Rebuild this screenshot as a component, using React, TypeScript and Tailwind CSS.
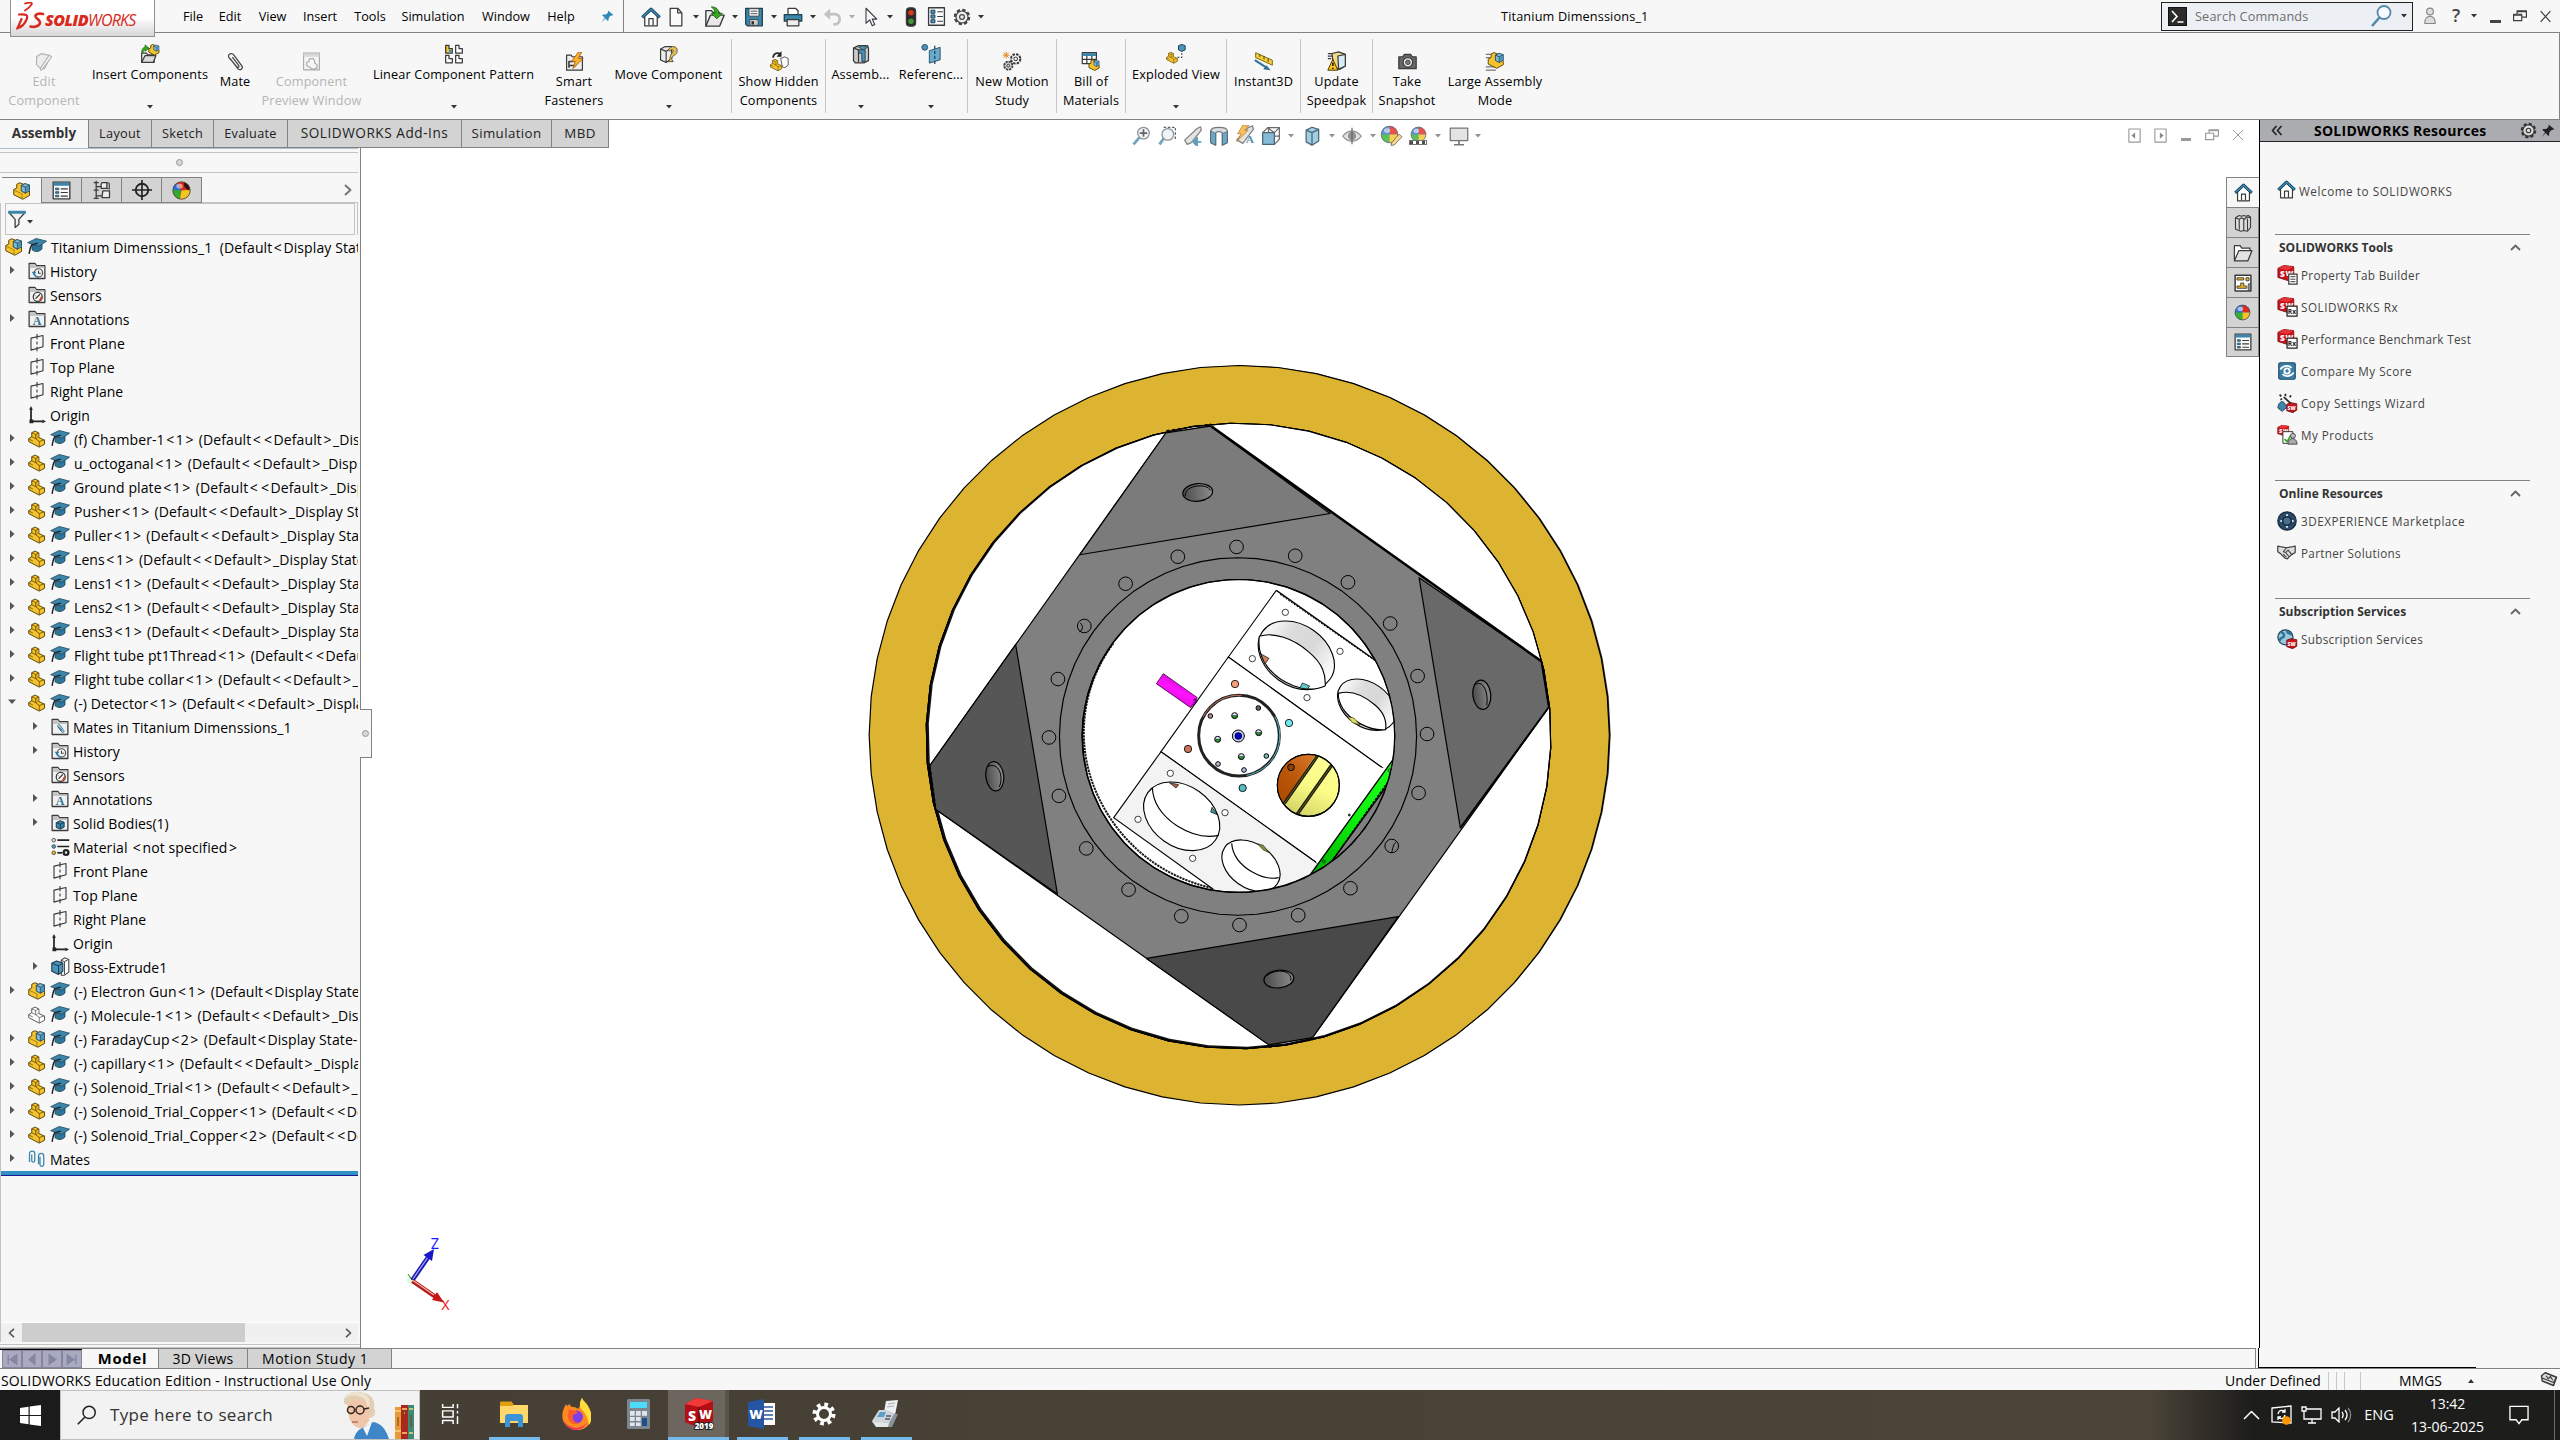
import React from "react";

type Kids = { children?: React.ReactNode; className?: string };

/* ---------- small drawing helpers ---------- */

const Svg = ({ s = 20, w, h, vb = "0 0 24 24", children, className = "" }: { s?: number; w?: number; h?: number; vb?: string } & Kids) => (
  <svg width={w ?? s} height={h ?? s} viewBox={vb} fill="none" stroke="#3b3b3b" strokeWidth="1.5" strokeLinejoin="round" className={`shrink-0 ${className}`}>
    {children}
  </svg>
);

const Caret = ({ className = "w-[15px]", c = "#333" }: { className?: string; c?: string }) => (
  <span className={`flex shrink-0 justify-center ${className}`}>
    <svg width="6" height="4" viewBox="0 0 6 4"><path d="M0 0h6L3 3.6z" fill={c} /></svg>
  </span>
);

const PartPaths = ({ ghost = false }: { ghost?: boolean }) => (
  <g stroke={ghost ? "#555" : "#5b4708"} strokeWidth="1.3">
    <path d="M1 11.5 5 9V3.5L9.500 1.500 14.500 4v6l7.500 3.500V19l-7 3.800L1 15.500z" fill={ghost ? "#fff" : "#f5c32c"} />
    <path d="M5 9l5 2.500 4.500-2M5 3.700 10 6v5.500l5 3.500v7.500M10 6l4.500-2M15 15.500l7-2.500M1 11.800l5.500 3" fill="none" strokeWidth="1" />
    <path d="M10.500 6.600 14 5v4.500l-3.500 1.600z" fill={ghost ? "#eee" : "#d9a514"} stroke="none" />
  </g>
);

const Part = ({ s = 18, ghost = false }: { s?: number; ghost?: boolean }) => (
  <Svg s={s}><PartPaths ghost={ghost} /></Svg>
);

const CubePaths = () => (
  <g stroke="#1d4257" strokeWidth="1.2">
    <path d="M11 4.500 16 2l6 2v7.500l-5.500 3.500L11 12z" fill="#7db9d8" />
    <path d="M11 4.500 16.500 7 22 4.200M16.500 7v8" />
    <path d="M17 7.500 21.500 5v6.200L17 14z" fill="#4b93b8" stroke="none" />
  </g>
);

const Asm = ({ s = 18 }: { s?: number }) => (
  <Svg s={s}>
    <path d="M1 10 5 8V3l4-2 5 2v7l8 2v6l-9 5L1 17z" fill="#f5c32c" stroke="#5b4708" strokeWidth="1.3" />
    <path d="M1 10.500 12 16v6.500" stroke="#8a6b0e" strokeWidth="1" />
    <CubePaths />
  </Svg>
);

const Grad = () => (
  <Svg w={20} h={18} vb="0 0 24 21">
    <path d="M6 9v6c4 3 8 3 12-1V8z" fill="#2f7396" stroke="#1f4c63" strokeWidth="1" />
    <path d="M.8 6.500 11 1.500l12.500 3.200L14 11z" fill="#3b86ab" stroke="#1f4c63" strokeWidth="1" />
    <path d="M13 7 5.500 9.200C3.500 13 3.200 16 2.500 20" stroke="#222" strokeWidth="1.700" />
  </Svg>
);

const Folder = ({ children }: Kids) => (
  <Svg s={18}>
    <path d="M1.500 22V2h8l2 3H22.500v17z" fill="#f1f1f1" strokeWidth="1.700" />
    <path d="M2.500 3h6.500l2 3H22v2H2.500z" fill="#c4c4c4" stroke="none" />
    {children}
  </Svg>
);

const FHistory = () => (
  <Folder>
    <circle cx="14" cy="14.500" r="5.500" stroke="#555" strokeWidth="1.600" />
    <path d="M14 11.500v3.500h3" stroke="#444" />
    <path d="M5 13h6L8 18z" fill="#2f7ea6" stroke="none" />
    <path d="M8 14c0 4 3 6 6 6" stroke="#2f7ea6" strokeWidth="2" />
  </Folder>
);
const FSensors = () => (
  <Folder>
    <circle cx="13" cy="14.500" r="6" fill="#fff" strokeWidth="1.700" />
    <path d="M14 19.500l4-7 .8 3.500-2 3z" fill="#e23b1c" stroke="none" />
    <path d="M10 17l6-6M9 13h1" strokeWidth="1.600" />
  </Folder>
);
const FAnnot = () => (
  <Folder>
    <text x="12.200" y="20" textAnchor="middle" fontSize="16" fontWeight="700" fontFamily="Liberation Serif, serif" fill="#2f7396" stroke="none">A</text>
  </Folder>
);
const FMates = () => (
  <Folder>
    <path d="M9 11l6 8c1.500 1 3-.5 2.200-2L12 9.500c-1.500-1.500-4 0-3 2l5 6.500M11 11.500l4.500 6" stroke="#2f7396" strokeWidth="1.300" />
  </Folder>
);
const FBodies = () => (
  <Folder>
    <path d="M7 11.500 12 9l5.500 2v6.500L12.500 20 7 18z" fill="#3b86ab" stroke="#16384a" strokeWidth="1.300" />
    <path d="M7 11.500l5.500 2 5-2.500M12.500 13.500V20" stroke="#16384a" strokeWidth="1.200" />
  </Folder>
);
const Plane = () => (
  <Svg s={18}>
    <path d="M4 5.500 20 2v15L4 21.500z" strokeWidth="1.500" />
    <path d="M12 0v7M12 10v4M12 17v6" strokeWidth="1.500" />
  </Svg>
);
const Origin = () => (
  <Svg s={18}>
    <path d="M4 4v16.500h15" stroke="#222" strokeWidth="2.300" />
    <path d="M4 0l2.500 5h-5zM24 20.500l-5 2.500v-5zM2 18h5v5H2z" fill="#222" stroke="none" />
  </Svg>
);
const Material = () => (
  <Svg s={19}>
    <path d="M8 4h15M8 12h15" stroke="#222" strokeWidth="2.200" />
    <path d="M8 20h6" stroke="#222" strokeWidth="2.200" />
    <circle cx="3.500" cy="4" r="2.300" fill="#ddd" strokeWidth="1" />
    <circle cx="3.500" cy="12" r="2.300" fill="#4fa0c8" strokeWidth="1" />
    <circle cx="3.500" cy="20" r="2.300" fill="#f0b81a" strokeWidth="1" />
    <circle cx="19" cy="19.500" r="3" stroke="#222" strokeWidth="3" />
  </Svg>
);
const Extrude = () => (
  <Svg s={19}>
    <path d="M13 4 17 1l5.500 2v16L17 23h-4z" fill="#fff" strokeWidth="1.300" />
    <path d="M17 6v16M13 4l4 2 5-3" strokeWidth="1.200" />
    <path d="M1 8 7 5l8 2.500V18l-5.500 4L1 18z" fill="#4b93b8" stroke="#16384a" strokeWidth="1.300" />
    <path d="M1 8l8 3 6-3M9.500 11v11" stroke="#16384a" strokeWidth="1.200" />
  </Svg>
);
const MatesIcon = () => (
  <Svg s={18}>
    <path d="M2 16V4.500c0-4 7-4 7 0V14c0 3-4 3-4 0V6M14 19V7.500c0-4 7-4 7 0V18c0 5-5 5-5 1V9" stroke="#3d86ad" strokeWidth="1.700" />
  </Svg>
);

const Ball = ({ s = 18 }: { s?: number }) => (
  <Svg s={s}>
    <circle cx="12" cy="12" r="10.500" fill="#2d6fd0" stroke="none" />
    <path d="M12 12 1.800 9.500A10.500 10.500 0 0 1 12 1.500z" fill="#3a78d4" stroke="none" />
    <path d="M12 12V1.500A10.500 10.500 0 0 1 22.500 12z" fill="#e0281c" stroke="none" />
    <path d="M12 12H1.500A10.500 10.500 0 0 0 12 22.500z" fill="#35b22d" stroke="none" />
    <path d="M12 12v10.500A10.500 10.500 0 0 0 22.500 12z" fill="#f2c521" stroke="none" />
    <ellipse cx="9" cy="7" rx="4" ry="3" fill="#fff" opacity=".55" stroke="none" />
    <circle cx="12" cy="12" r="10.500" strokeWidth="1" stroke="#444" />
  </Svg>
);
/* colour ball for the display manager: red upper left, dark notch upper right */
const DisplayBall = () => (
  <Svg s={19}>
    <circle cx="12" cy="12" r="11" fill="#e0281c" stroke="none" />
    <path d="M12 12 1.500 9A11 11 0 0 0 10 22.800z" fill="#35a82d" stroke="none" />
    <path d="M12 12 6 2.700A11 11 0 0 0 1 11z" fill="#2d6fd0" stroke="none" />
    <path d="M12 12l-2 10.800A11 11 0 0 0 23 11z" fill="#f2c521" stroke="none" />
    <path d="M15 2c6 1 8 6 7 10-4-1-8-5-7-10z" fill="#2b1410" stroke="none" />
    <ellipse cx="9.500" cy="6.500" rx="4" ry="3" fill="#fff" opacity=".5" stroke="none" />
    <circle cx="12" cy="12" r="11" strokeWidth="1" stroke="#444" />
  </Svg>
);
const ListIcon = ({ s = 20 }: { s?: number }) => (
  <Svg s={s}>
    <path d="M1.500 1.500h21v21h-21z" fill="#fafafa" strokeWidth="1.700" />
    <path d="M2 2h20v4H2z" fill="#3b86ab" stroke="none" />
    <path d="M4.500 9h4v2h-4zM4.500 13.500h4v2h-4zM4.500 18h4v2h-4z" fill="#4b93b8" strokeWidth="1" stroke="#1d4257" />
    <path d="M11 10h9M11 14.500h9M11 19h9" />
  </Svg>
);
const OptionList = () => (
  <Svg s={19}>
    <path d="M2 1h20v22H2z" fill="#fafafa" strokeWidth="1.700" />
    <path d="M5 4h5v4H5zM5 10h5v4H5zM5 16h5v4H5z" fill="#4b93b8" strokeWidth="1.200" stroke="#1d4257" />
    <path d="M13 6h7M13 12h7M13 18h7" />
  </Svg>
);
const ConfigIcon = () => (
  <Svg s={20}>
    <path d="M5 1v21M5 8h7M5 19h7" />
    <path d="M2 3h6M2 12h6M2 22h6" />
    <path d="M12 3h6v7h-7V5zM13 13h8v8h-9z" fill="#eee" />
    <path d="M18 3l3 1v7l-3-1z" fill="#aaa" strokeWidth="1" />
  </Svg>
);
const Target = () => (
  <Svg s={20}>
    <circle cx="12" cy="12" r="7.500" strokeWidth="2.200" stroke="#222" />
    <path d="M12 0v24M0 12h24" strokeWidth="2" stroke="#222" />
  </Svg>
);
const Home = ({ s = 20 }: { s?: number }) => (
  <Svg s={s}>
    <path d="M4.500 11v11.500h15V11L12 4z" fill="#fff" />
    <path d="M9.500 22v-8h5v8" />
    <path d="M1.500 12.500 12 2.500l10.500 10" stroke="#153f57" strokeWidth="3.600" />
    <path d="M2 12 12 2.800 22 12" stroke="#3f92bb" strokeWidth="1.500" />
  </Svg>
);
const Gear = ({ s = 20, c = "#444", f = "#eee" }: { s?: number; c?: string; f?: string }) => (
  <Svg s={s}>
    <g stroke={c}>
      <circle cx="12" cy="12" r="9.500" strokeWidth="3" strokeDasharray="4.500 2.960" />
      <circle cx="12" cy="12" r="8" fill={f} strokeWidth="1.600" />
      <circle cx="12" cy="12" r="3.200" strokeWidth="1.600" />
    </g>
  </Svg>
);
const Doc = () => <Svg s={20}><path d="M5 1.500h9L19 7v15.500H5z" fill="#fbfbfb" /><path d="M14 1.500V7h5" /></Svg>;
const OpenDoc = () => (
  <Svg s={22}>
    <path d="M2 22V5h6l2 2h7v3" fill="#eee" /><path d="M2 22 7 10h15l-5 12z" fill="#e8e8e8" />
    <path d="M8 1c6 0 8 3 8 7h4l-6 6-6-6h4c0-3-1-5-4-7z" fill="#35a81f" stroke="#1c6b10" strokeWidth="1" />
  </Svg>
);
const Save = () => (
  <Svg s={20}>
    <path d="M2 1.500h20v21H4l-2-2z" fill="#3b86ab" stroke="#1f3e4f" />
    <path d="M6 2h12v9H6z" fill="#f4f4f4" strokeWidth="1" /><path d="M8 5h8M8 8h8" strokeWidth="1" />
    <path d="M7 22v-7h10v7z" fill="#ccc" strokeWidth="1" /><path d="M9 17h3v4H9z" fill="#333" stroke="none" />
  </Svg>
);
const Print = () => (
  <Svg s={20}>
    <path d="M6 9V1.500h9l3 3V9" fill="#fff" />
    <path d="M1.500 9h21v8h-21z" fill="#3b86ab" stroke="#1f3e4f" />
    <path d="M5 15h14v7.500H5z" fill="#eee" />
  </Svg>
);
const Undo = () => <Svg s={19}><path d="M4 9h11c8 0 8 13 0 13h-2" stroke="#c2c2c2" strokeWidth="3.500" /><path d="M9 2v14L1 9z" fill="#c2c2c2" stroke="none" /></Svg>;
const Pointer = () => <Svg s={20}><path d="M6 1.500v18l4.500-4 3 7 3-1.500-3-6.500H19z" fill="#f4f5fa" strokeWidth="1.300" /></Svg>;
const Traffic = () => (
  <Svg s={20}>
    <rect x="6.500" y="1" width="11" height="22" rx="4" fill="#2b2b2b" />
    <circle cx="12" cy="7" r="3.300" fill="#d8391f" stroke="none" /><circle cx="12" cy="17" r="3.300" fill="#3f9a35" stroke="none" />
  </Svg>
);
const Pin = ({ c, s = 15 }: { c: string; s?: number }) => (
  <Svg s={s}><path d="M13 1l10 8-3 1-3 1-3 4v4l-1.500 1.500-4.500-5L1 23l6-9-5-4 2-1.500h5l4-4z" fill={c} stroke="none" /></Svg>
);

/* ---------- ribbon icons ---------- */

const REdit = () => <Svg s={19}><g opacity=".35"><path d="M2 6 8 2l9 2v7l-5 10H7l-5-5z" fill="#ddd" /><path d="M21 6 9 22l-2 1 0-3L18 4z" fill="#fff" /></g></Svg>;
const RInsert = () => (
  <Svg s={20}>
    <path d="M2 22V11h6l1 2h8v9z" fill="#eee" /><path d="M2 22l4-8h13l-3 8z" fill="#dcdcdc" />
    <path d="M2 10C2 6 4 4 6 4V1l5 4-5 4V7C5 7 4 8 4 10z" fill="#35a81f" stroke="#1c6b10" strokeWidth=".8" />
    <g transform="translate(10 0) scale(.58)"><path d="M1 10 5 8V3l4-2 5 2v7l8 2v6l-9 5L1 17z" fill="#f5c32c" stroke="#5b4708" strokeWidth="2" /><CubePaths /></g>
  </Svg>
);
const RMate = () => <Svg s={19}><path d="M5 8l10 13c3 3 7 0 5-3.500L10 4C7 0 1 3 4 7.500L14 19c1 1 3 0 2-2L8 6.500" stroke="#444" strokeWidth="1.600" /></Svg>;
const RPreview = () => <Svg s={19}><g opacity=".4"><path d="M2 1.500h20v21H2z" fill="#f3f3f3" /><path d="M2 5h20M2 3h20" strokeWidth="2" stroke="#aaa" /><path d="M6 13l3-1V9l5-1 2 3v3l3 2v4l-5 2-8-5z" /></g></Svg>;
const RLinear = () => (
  <Svg s={20}>
    <path d="M2 1.500h4v4h4V11H2z" fill="#f5c32c" /><path d="M6 7h4v3.500H6z" fill="#4b93b8" stroke="none" />
    <path d="M14 1.500h4v4h4V11h-8zM2 13.500h4v4h4v5H2zM14 13.500h4v4h4v5h-8z" fill="#fff" />
  </Svg>
);
const RSmart = () => (
  <Svg s={19}>
    <path d="M2 4h6l1 2h13v17H2z" fill="#eee" /><path d="M5 20V12h6M6 17h8" strokeWidth="2" />
    <path d="M17 0 8 12h5l-3 9L23 8h-6l4-8z" fill="#f7b32b" stroke="#a14c0c" strokeWidth="1" />
  </Svg>
);
const RMove = () => (
  <Svg s={19}>
    <path d="M2 5 8 2h8v15l-7 5-7-3z" fill="#eee" /><path d="M2 5l7 3 7-4M9 8v14" />
    <path d="M12 6c3-6 11-5 11 1 0 7-7 5-7 11l2 3h-6l2-4c0-7 4-6 4-10-1-2-3-1-4 1z" fill="#e9c04a" strokeWidth="1" />
  </Svg>
);
const RShow = () => (
  <Svg s={20}>
    <path d="M14 9l5-2 4 2v8l-4 3-3-1z" fill="#fff" strokeWidth="1" />
    <g transform="translate(1 9) scale(.65)"><PartPaths /></g>
    <path d="M5 8c0-5 5-7 9-4" stroke="#222" strokeWidth="2" /><path d="M15 0v7H9z" fill="#222" stroke="none" />
  </Svg>
);
const RAssemb = () => (
  <Svg s={20}>
    <path d="M3 5 9 2h11l1 3v15l-5 2.500H5L3 20z" fill="#ccc" /><path d="M9 7h8v14h-4V11H9z" fill="#4b93b8" stroke="#16384a" strokeWidth="1" />
    <path d="M3 5l6 2 0 15" /><path d="M9 4l5-2 6 2-5 3z" fill="#4b93b8" strokeWidth="1" />
  </Svg>
);
const RRef = () => (
  <Svg s={20}>
    <circle cx="4.500" cy="4" r="3.500" fill="#4b93b8" stroke="#1d4257" strokeWidth="1" />
    <path d="M10 8 23 4v15l-13 4z" fill="#6aaccd" stroke="#1d4257" strokeWidth="1" /><path d="M16.500 2v22" stroke="#1d4257" strokeDasharray="4 2" />
  </Svg>
);
const RMotion = () => (
  <Svg s={20}>
    <g transform="translate(9 2) scale(.62)"><circle cx="12" cy="12" r="9" fill="#fff" strokeWidth="4" strokeDasharray="5 2" /><circle cx="12" cy="12" r="3.500" strokeWidth="2" /></g>
    <g transform="translate(1 11) scale(.55)"><circle cx="12" cy="12" r="9" fill="#ccc" strokeWidth="4" strokeDasharray="5 2" /><circle cx="12" cy="12" r="3" strokeWidth="2" /></g>
    <path d="M5 1v8M1 5h8M2 2l6 6M8 2 2 8" stroke="#e08a1a" strokeWidth="1.200" />
  </Svg>
);
const RBill = () => (
  <Svg s={20}>
    <path d="M1.500 2h17v13h-17z" fill="#fff" /><path d="M2 2.500h16V6H2z" fill="#3b86ab" stroke="none" /><path d="M1.500 10h17M7 6v9M13 6v9" />
    <g transform="translate(9 10) scale(.58)"><path d="M1 10 5 8V3l4-2 5 2v7l8 2v6l-9 5L1 17z" fill="#f5c32c" stroke="#5b4708" strokeWidth="2" /><CubePaths /></g>
  </Svg>
);
const RExplode = () => (
  <Svg s={20}>
    <g transform="translate(0 9) scale(.62)"><PartPaths /></g>
    <path d="M15 2l4-1.500L23 2v5l-4 2-4-2z" fill="#4b93b8" stroke="#1d4257" strokeWidth="1.200" />
    <path d="M19 11v5h-6" strokeDasharray="2 2" />
  </Svg>
);
const RInstant = () => (
  <Svg s={20}>
    <path d="M2 2l20 9v6L2 8z" fill="#f5cf2e" stroke="#6b540a" strokeWidth="1" /><path d="M7 4v3M12 6v4M17 9v4" strokeWidth="1.200" />
    <path d="M1 11l14 9" stroke="#2f7396" strokeWidth="2.500" /><path d="M20 23l-9-1 4-5z" fill="#2f7396" stroke="none" />
  </Svg>
);
const RUpdate = () => (
  <Svg s={20}>
    <path d="M6 3l8-2 8 3v14l-7 4-7-3z" fill="#f5d98c" /><path d="M13 6l9-2v14l-8 4z" fill="#d7edf7" /><path d="M1 3h5M1 6h5M1 9h4" />
    <path d="M7 10l6 13H1z" fill="#ffc61a" stroke="#4a3a00" strokeWidth="1.200" /><path d="M7 14v4M7 20v1.500" stroke="#222" strokeWidth="2" />
  </Svg>
);
const RCamera = () => (
  <Svg s={19}>
    <path d="M1 6h5l2-3h8l2 3h5v15H1z" fill="#666" /><circle cx="12.500" cy="13" r="6" fill="#eee" /><circle cx="12.500" cy="13" r="3" fill="#777" strokeWidth="1" />
  </Svg>
);
const RLarge = () => (
  <Svg s={20}>
    <path d="M1 4h8M1 8h6M1 19h12M1 23h12" stroke="#777" />
    <g transform="translate(3 1) scale(.86)"><path d="M1 10 5 8V3l4-2 5 2v7l8 2v6l-9 5L1 17z" fill="#f5c32c" stroke="#5b4708" strokeWidth="1.300" /><CubePaths /></g>
  </Svg>
);

/* ---------- title bar ---------- */

const Cell = ({ className = "", children }: Kids) => <div className={`flex shrink-0 items-center justify-center whitespace-nowrap ${className}`}>{children}</div>;

const DsLogo = () => (
  <svg width="30" height="28" viewBox="0 0 30 28" fill="none" stroke="#d9291c" strokeLinecap="round" className="shrink-0">
    <path d="M9 1.500c5-1.500 8-1 6.500 1-1.200 2-4 4.500-6.500 6" strokeWidth="1.800" />
    <path d="M3 12.500c7-.8 9.500.5 7.500 5-1.500 4-5 7.500-9 8.700L5.500 17" strokeWidth="2.200" />
    <path d="M27 12c-4-1-8 0-7.500 2.500.5 2.200 5 3.500 4.500 6.500-.5 3-5.500 4.500-9.500 3.500" strokeWidth="2.600" />
  </svg>
);

const TitleBar = () => (
  <div className="relative z-10 flex h-[33px] shrink-0 border-b border-[#828282] bg-[#f7f7f7]">
    <div className="ml-[10px] flex h-[37px] w-[145px] shrink-0 items-center border-x border-b border-[#909090] bg-gradient-to-b from-white from-50% to-[#d6d6d6] pb-[5px] pl-[5px]">
      <DsLogo />
      <span className="-ml-px mt-[9px] flex whitespace-nowrap text-[16px] italic leading-none text-[#d9291c]">
        <b className="font-extrabold tracking-[-0.5px]">SOLID</b><span className="tracking-[-0.8px]">WORKS</span>
      </span>
    </div>
    <div className="flex w-[469px] shrink-0 items-center border-r border-[#828282] pl-[20px] pt-px">
      <Cell className="w-[36px]">File</Cell><Cell className="w-[38px]">Edit</Cell><Cell className="w-[47px]">View</Cell><Cell className="w-[48px]">Insert</Cell>
      <Cell className="w-[52px]">Tools</Cell><Cell className="w-[74px]">Simulation</Cell><Cell className="w-[72px]">Window</Cell><Cell className="w-[38px]">Help</Cell>
      <Cell className="ml-[12px] w-[31px]"><Pin c="#3189b8" s={13} /></Cell>
    </div>
    <div className="flex items-center pl-[14px] pt-px">
      <Cell className="w-[26px]"><Home /></Cell>
      <Cell className="w-[24px]"><Doc /></Cell><Caret />
      <Cell className="w-[24px]"><OpenDoc /></Cell><Caret />
      <Cell className="w-[24px]"><Save /></Cell><Caret />
      <Cell className="w-[24px]"><Print /></Cell><Caret />
      <Cell className="w-[24px]"><Undo /></Cell><Caret className="w-[16px]" c="#aaa" />
      <Cell className="w-[21px]"><Pointer /></Cell><Caret className="w-[18px]" />
      <Cell className="w-[24px]"><Traffic /></Cell>
      <Cell className="w-[27px]"><OptionList /></Cell>
      <Cell className="w-[23px]"><Gear s={18} /></Cell><Caret className="w-[16px]" />
      <span className="ml-[512px] whitespace-nowrap tracking-[0.15px]">Titanium Dimenssions_1</span>
    </div>
    <div className="ml-auto flex shrink-0 items-center">
      <div className="flex h-[29px] w-[252px] items-center border border-[#222] bg-[#eceff4] pl-[6px] pr-[3px]">
        <svg width="19" height="19" viewBox="0 0 19 19"><rect x=".5" y=".5" width="18" height="18" fill="#2b2b2b" stroke="#111" /><path d="M4 4l5 5.500L4 15M9.500 15h6" stroke="#fff" strokeWidth="1.600" fill="none" /></svg>
        <span className="ml-[8px] pt-px tracking-[0.15px] text-[#6e6e6e]">Search Commands</span>
        <span className="ml-auto"><Svg s={24}><circle cx="15" cy="8.500" r="6.500" fill="#f7fbfe" stroke="#5588ab" strokeWidth="1.800" /><path d="M10.500 13.500 3 22" stroke="#5588ab" strokeWidth="2.600" /></Svg></span>
        <Caret className="ml-[6px] w-[10px]" />
      </div>
      <Cell className="ml-[5px] w-[24px]"><Svg s={18}><circle cx="12" cy="6" r="4.500" fill="#ddd" stroke="#888" /><path d="M5 22c-1-13 15-13 14 0z" fill="#ddd" stroke="#888" /></Svg></Cell>
      <Cell className="ml-[4px] w-[20px] pb-px text-[18px] font-semibold text-[#444]">?</Cell><Caret className="w-[16px]" />
      <Cell className="w-[26px]"><span className="mt-[10px] h-[3px] w-[11px] bg-[#444]" /></Cell>
      <Cell className="w-[24px]"><Svg s={14}><path d="M1 9h14v11H1zM7 9V3h16v11h-8" strokeWidth="2" /><path d="M7 4.500h16M1 10.500h14" strokeWidth="2" /></Svg></Cell>
      <Cell className="w-[28px] pr-px"><Svg s={13}><path d="M3 2l18 20M21 2 3 22" strokeWidth="2.200" /></Svg></Cell>
    </div>
  </div>
);

/* ---------- ribbon ---------- */

type Cmd = { w: string; icon: React.ReactNode; a: string; b?: string; drop?: boolean; off?: boolean; sep?: boolean };
const cmds: Cmd[] = [
  { w: "w-[88px]", icon: <REdit />, a: "Edit", b: "Component", off: true },
  { w: "w-[124px]", icon: <RInsert />, a: "Insert Components", drop: true },
  { w: "w-[46px]", icon: <RMate />, a: "Mate" },
  { w: "w-[107px]", icon: <RPreview />, a: "Component", b: "Preview Window", off: true },
  { w: "w-[177px]", icon: <RLinear />, a: "Linear Component Pattern", drop: true },
  { w: "w-[64px]", icon: <RSmart />, a: "Smart", b: "Fasteners" },
  { w: "w-[126px]", icon: <RMove />, a: "Move Component", drop: true, sep: true },
  { w: "w-[94px]", icon: <RShow />, a: "Show Hidden", b: "Components", sep: true },
  { w: "w-[69px]", icon: <RAssemb />, a: "Assemb...", drop: true },
  { w: "w-[73px]", icon: <RRef />, a: "Referenc...", drop: true, sep: true },
  { w: "w-[89px]", icon: <RMotion />, a: "New Motion", b: "Study", sep: true },
  { w: "w-[69px]", icon: <RBill />, a: "Bill of", b: "Materials", sep: true },
  { w: "w-[101px]", icon: <RExplode />, a: "Exploded View", drop: true, sep: true },
  { w: "w-[74px]", icon: <RInstant />, a: "Instant3D", sep: true },
  { w: "w-[72px]", icon: <RUpdate />, a: "Update", b: "Speedpak", sep: true },
  { w: "w-[68px]", icon: <RCamera />, a: "Take", b: "Snapshot" },
  { w: "w-[108px]", icon: <RLarge />, a: "Large Assembly", b: "Mode" },
];

const Ribbon = () => (
  <div className="flex h-[87px] shrink-0 border-b border-r border-[#828282] bg-[#f7f7f7] py-[6px] tracking-[0.16px]">
    {cmds.map((c, i) => (
      <div key={i} className={`flex shrink-0 flex-col items-center whitespace-nowrap leading-[19px] ${c.w} ${c.sep ? "border-r border-[#c6c6c6]" : ""} ${c.off ? "text-[#b5b5b5]" : ""} ${c.drop ? "pt-[4px]" : "pt-[11px]"}`}>
        <span className="flex h-[22px] items-center">{c.icon}</span>
        <span>{c.a}</span>
        {c.b && <span>{c.b}</span>}
        {c.drop && <Caret className="mt-[21px] w-[6px]" />}
      </div>
    ))}
  </div>
);

/* ---------- command tabs + view toolbar ---------- */

const tabs: [string, string][] = [["w-[63px] tracking-[0.3px]", "Layout"], ["w-[62px] tracking-[0.3px]", "Sketch"], ["w-[74px] tracking-[0.3px]", "Evaluate"], ["w-[174px] text-[13.600px] tracking-[0.550px]", "SOLIDWORKS Add-Ins"], ["w-[90px] text-[13.300px] tracking-[0.4px]", "Simulation"], ["w-[57px] text-[13.300px] tracking-[0.4px]", "MBD"]];

const Lens = ({ children }: Kids) => <Svg s={20}><path d="M10 14 3 22" stroke="#4f8db3" strokeWidth="3.400" /><circle cx="15" cy="8.500" r="7" fill="#e9f3f9" stroke="#777" />{children}</Svg>;

const ViewTools = () => (
  <div className="ml-[519px] flex items-center pt-[3px] opacity-80">
    <Cell className="w-[26px]"><Lens><path d="M15 4v9M10.500 8.500h9" strokeWidth="2" /></Lens></Cell>
    <Cell className="w-[26px]"><Svg s={20}><path d="M8 1.500h14v14" strokeDasharray="3 2" /><path d="M8 15 3 22" stroke="#4f8db3" strokeWidth="3.400" /><circle cx="13" cy="10" r="7" fill="#e9f3f9" stroke="#777" /></Svg></Cell>
    <Cell className="w-[26px]"><Svg s={20}><path d="M2 17 17 3l4-2 1 4-12 15-5 2z" fill="#ddd" stroke="#666" /><path d="M12 19h10M12 19l5-5v10z" fill="#3b86ab" stroke="#3b86ab" strokeWidth="2" /></Svg></Cell>
    <Cell className="w-[26px]"><Svg s={20}><path d="M2 6c0-6 20-6 20 0v14l-6 3V9c0-3-8-3-8 0v14l-6-3z" fill="#cfd5d8" stroke="#555" /><path d="M2 6l6 3v14l-6-3zM16 9l6-2v13l-6 3z" fill="#4b93b8" stroke="#1d4257" strokeWidth="1" /></Svg></Cell>
    <Cell className="w-[26px]"><Svg s={21}><path d="M2 17 15 3l5-2 1 4L9 21z" fill="#ddd" stroke="#666" /><path d="M9 0 3 10h4l-5 9L15 6h-4l5-6z" fill="#f7b32b" stroke="#a14c0c" strokeWidth=".8" /><text x="17" y="20.500" textAnchor="middle" fontSize="13" fontWeight="700" fontFamily="Liberation Serif, serif" fill="#2f7396" stroke="none">A</text></Svg></Cell>
    <Cell className="w-[26px]"><Svg s={20}><path d="M8 2h14v14l-6 6V8z" fill="#fff" stroke="#444" /><path d="M2 8h14v14H2z" fill="#6aaccd" stroke="#1d4257" /><path d="M2 8 8 2M16 8l6-6M9 2v6M16 12h6" stroke="#444" /></Svg></Cell>
    <Caret className="w-[13px]" c="#777" />
    <Cell className="w-[30px]"><Svg s={20}><path d="M5 5 12 1.500 20 4v14l-8 5-7-4z" fill="#8cc3de" stroke="#1d4257" /><path d="M5 5l7 3 8-4M12 8v15" stroke="#1d4257" /></Svg></Cell>
    <Caret className="w-[9px]" c="#777" />
    <Cell className="w-[32px]"><Svg s={20}><path d="M1 12c6-8 16-8 22 0-6 8-16 8-22 0z" fill="#ddd" stroke="#777" /><circle cx="12" cy="12" r="5" fill="#777" stroke="none" /><path d="M12 2v20" stroke="#444" /></Svg></Cell>
    <Caret className="w-[9px]" c="#777" />
    <Cell className="w-[28px]"><span className="flex"><Ball s={19} /><Svg s={13} className="-ml-[9px] mt-[8px]"><path d="M3 18 17 2l5 5L8 22l-6 1z" fill="#f3cf73" /></Svg></span></Cell>
    <Cell className="w-[26px]"><span className="flex flex-col items-center"><Ball s={17} /><span className="-mt-[3px] h-[5px] w-[18px] border border-[#555] bg-[repeating-linear-gradient(90deg,#222_0_3px,#fff_3px_6px)]" /></span></Cell>
    <Caret className="w-[14px]" c="#777" />
    <Cell className="w-[28px]"><Svg s={20}><path d="M1.500 2.500h21v15h-21z" fill="#ddd" stroke="#555" /><path d="M12 18v4M6 22.500h12" stroke="#555" strokeWidth="2" /></Svg></Cell>
    <Caret className="w-[10px]" c="#777" />
  </div>
);

const DocControls = () => (
  <div className="ml-auto mr-[8px] flex items-center pt-[2px]">
    <Cell className="w-[26px]"><Svg s={15}><path d="M3 1.500h18v21H3z" stroke="#999" strokeWidth="1.800" /><path d="M13 7v10l-6-5z" fill="#888" stroke="none" /></Svg></Cell>
    <Cell className="w-[26px]"><Svg s={15}><path d="M3 1.500h18v21H3z" stroke="#999" strokeWidth="1.800" /><path d="M11 7v10l6-5z" fill="#888" stroke="none" /></Svg></Cell>
    <Cell className="w-[26px]"><span className="mt-[8px] h-[3px] w-[10px] bg-[#999]" /></Cell>
    <Cell className="w-[26px]"><Svg s={14}><path d="M1 9h14v11H1zM7 9V3h16v11h-8" stroke="#999" strokeWidth="2" /><path d="M7 4.500h16" stroke="#999" strokeWidth="2" /></Svg></Cell>
    <Cell className="w-[26px]"><Svg s={12}><path d="M2 2l20 20M22 2 2 22" stroke="#999" strokeWidth="2" /></Svg></Cell>
  </div>
);

const TabRow = () => (
  <div className="flex h-[28px] shrink-0 bg-white">
    <div className="flex w-[88px] items-center justify-center border-b border-[#f7f7f7] bg-[#f7f7f7] text-[13.500px] font-bold text-[#333]">Assembly</div>
    <div className="flex border-l border-[#828282]">
      {tabs.map(([w, t]) => (
        <div key={t} className={`flex items-center justify-center whitespace-nowrap border-b border-r border-[#828282] bg-[#d3d3d3] text-[#222] ${w}`}>{t}</div>
      ))}
    </div>
    <ViewTools />
    <DocControls />
  </div>
);

/* ---------- feature tree ---------- */

type Row = { d?: number; x?: string; i: React.ReactNode; g?: boolean; t: string };
const D = "(Default<<Default>_Display State 1>)";
const A = "(Default<Display State-1>)";
const part = (t: string, tail = D): Row => ({ x: "r", i: <Part />, g: true, t: `${t} ${tail}` });
const rows: Row[] = [
  { x: "r", i: <FHistory />, t: "History" },
  { i: <FSensors />, t: "Sensors" },
  { x: "r", i: <FAnnot />, t: "Annotations" },
  { i: <Plane />, t: "Front Plane" },
  { i: <Plane />, t: "Top Plane" },
  { i: <Plane />, t: "Right Plane" },
  { i: <Origin />, t: "Origin" },
  part("(f) Chamber-1<1>"), part("u_octoganal<1>"), part("Ground plate<1>"), part("Pusher<1>"), part("Puller<1>"),
  part("Lens<1>"), part("Lens1<1>"), part("Lens2<1>"), part("Lens3<1>"), part("Flight tube pt1Thread<1>"), part("Flight tube collar<1>"),
  { x: "d", i: <Part />, g: true, t: `(-) Detector<1> ${D}` },
  { d: 1, x: "r", i: <FMates />, t: "Mates in Titanium Dimenssions_1" },
  { d: 1, x: "r", i: <FHistory />, t: "History" },
  { d: 1, i: <FSensors />, t: "Sensors" },
  { d: 1, x: "r", i: <FAnnot />, t: "Annotations" },
  { d: 1, x: "r", i: <FBodies />, t: "Solid Bodies(1)" },
  { d: 1, i: <Material />, t: "Material <not specified>" },
  { d: 1, i: <Plane />, t: "Front Plane" },
  { d: 1, i: <Plane />, t: "Top Plane" },
  { d: 1, i: <Plane />, t: "Right Plane" },
  { d: 1, i: <Origin />, t: "Origin" },
  { d: 1, x: "r", i: <Extrude />, t: "Boss-Extrude1" },
  { x: "r", i: <Asm />, g: true, t: `(-) Electron Gun<1> ${A}` },
  { i: <Part ghost />, g: true, t: `(-) Molecule-1<1> ${D}` },
  { x: "r", i: <Asm />, g: true, t: `(-) FaradayCup<2> ${A}` },
  part("(-) capillary<1>"), part("(-) Solenoid_Trial<1>"), part("(-) Solenoid_Trial_Copper<1>"), part("(-) Solenoid_Trial_Copper<2>"),
  { x: "r", i: <MatesIcon />, t: "Mates" },
];

/* angle brackets get a little side bearing so that they read as separate marks */
const Label = ({ t }: { t: string }) => (
  <span className={`whitespace-pre ${t.includes("<") ? "tracking-[0.1px]" : ""}`}>
    {t.split(/([<>])/).map((p, i) => (p === "<" || p === ">" ? <span key={i} className="px-[1.500px]">{p}</span> : p))}
  </span>
);

const TreeRow = ({ r }: { r: Row }) => (
  <div className={`flex h-[24px] shrink-0 items-center ${r.d ? "pl-[30px]" : "pl-[7px]"}`}>
    <span className="flex w-[20px] shrink-0 pb-[2px]">
      {r.x === "r" && <svg width="6" height="8" viewBox="0 0 6 8" className="ml-[2px]"><path d="M0 0l4.500 4L0 8z" fill="#555" /></svg>}
      {r.x === "d" && <svg width="8" height="6" viewBox="0 0 8 6"><path d="M0 .5h8L4 5z" fill="#555" /></svg>}
    </span>
    <span className="flex w-[22px] shrink-0 pb-px">{r.i}</span>
    {r.g && <span className="flex w-[24px] shrink-0 pb-[2px]"><Grad /></span>}
    <Label t={r.t} />
  </div>
);

const Dot = () => <span className="h-[7px] w-[7px] rounded-full border border-[#999] bg-[#d6d6d6]" />;

const ptab = "flex w-[40px] items-center justify-center border-r border-t border-b border-[#828282] bg-[#d3d3d3]";

const LeftPanel = () => (
  <div className="flex w-[361px] shrink-0 flex-col border-r border-[#828282] bg-[#f7f7f7] text-[14px]">
    <div className="mr-[2px] h-[5px] border-b border-[#c3c3c3] border-t border-t-[#a9c3cc]" />
    <div className="mr-[2px] flex h-[20px] items-center justify-center border-b border-[#c3c3c3]"><Dot /></div>
    <div className="mt-[4px] flex h-[26px] pl-[2px]">
      <div className="flex w-[40px] items-center justify-center border-r border-t border-[#828282]"><Asm /></div>
      <div className={ptab}><ListIcon s={19} /></div>
      <div className={ptab}><ConfigIcon /></div>
      <div className={ptab}><Target /></div>
      <div className={ptab}><DisplayBall /></div>
      <div className="mr-[2px] flex flex-1 items-center justify-end border-b border-[#c3c3c3] pr-[6px]"><Svg w={8} h={12} vb="0 0 8 12"><path d="M1 1l5.500 5L1 11" stroke="#777" strokeWidth="2" /></Svg></div>
    </div>
    <div className="mr-[2px] border-l border-r border-[#c3c3c3] pl-[4px] pr-[2px]">
      <div className="flex h-[32px] items-center border border-[#c3c3c3] pl-[2px]">
        <Svg s={18}><path d="M1 3h22L14.500 12.500V19l-5 4.500v-11z" fill="#f2f2f2" strokeWidth="1.700" /><path d="M.5 1h23v4H.5z" fill="#3b86ab" stroke="none" /></Svg>
        <Caret className="mt-[6px] w-[8px]" />
      </div>
    </div>
    <div className="mr-[2px] flex flex-1 flex-col overflow-hidden border-l border-[#c3c3c3]">
      <div className="flex h-[24px] shrink-0 items-center pl-[4px]">
        <span className="flex w-[22px] shrink-0 pb-px"><Asm /></span><span className="flex w-[24px] shrink-0 pb-[2px]"><Grad /></span><Label t="Titanium Dimenssions_1  (Default<Display State-1>)" />
      </div>
      {rows.map((r, i) => <TreeRow key={i} r={r} />)}
      <div className="h-[5px] shrink-0 border-b border-[#1b1b8f] bg-[#3290c8]" />
      <div className="mt-auto flex h-[20px] shrink-0 items-center border-t border-white bg-[#f0f0f0]">
        <Cell className="w-[21px]"><Svg w={7} h={10} vb="0 0 8 12"><path d="M7 1 1.500 6 7 11" stroke="#555" strokeWidth="2" /></Svg></Cell>
        <span className="h-[19px] w-[223px] bg-[#cdcdcd]" />
        <Cell className="ml-auto w-[20px]"><Svg w={7} h={10} vb="0 0 8 12"><path d="M1 1l5.500 5L1 11" stroke="#555" strokeWidth="2" /></Svg></Cell>
      </div>
    </div>
    <div className="mt-[2px] h-[4px] shrink-0 border-y border-[#c3c3c3]" />
  </div>
);

/* ---------- model view ---------- */

const ring = (cx: number, cy: number, rx: number, ry: number, n = 50, o = 0) =>
  Array.from({ length: n }, (_, i) => {
    const a = ((i + o) / n) * Math.PI * 2;
    return `${(cx + rx * Math.cos(a)).toFixed(1)} ${(cy + ry * Math.sin(a)).toFixed(1)}`;
  }).join("L");

const bolts = [[777, 401], [895, 419], [1001, 473], [1086, 557], [1141, 664], [1160, 782], [1143, 902], [1089, 1010], [1006, 1096], [901, 1151], [783, 1171], [666, 1153], [560, 1099], [475, 1015], [420, 908], [400, 789], [418, 670], [471, 562], [554, 476], [659, 421]];
const screws = [[676, 157], [840, 274], [577, 296], [741, 413], [331, 640], [234, 778], [495, 758], [398, 895]];

const Model = () => (
  <svg width="780" height="770" viewBox="0 0 780 770" className="absolute left-[489px] top-[202px]" fill="none" stroke="#000">
    <defs>
      <clipPath id="bore"><circle cx="535" cy="527.500" r="468" /></clipPath>
      <clipPath id="brass"><circle cx="745" cy="676" r="93" /></clipPath>
      <linearGradient id="shade" x1="0" y1="0" x2="1" y2="0"><stop offset="0" stopColor="#fafafa" /><stop offset=".3" stopColor="#dcdcdc" /><stop offset=".6" stopColor="#d8d8d8" /><stop offset="1" stopColor="#fff" /></linearGradient>
      <linearGradient id="leaf" x1="1" y1="0" x2="0" y2="1"><stop offset="0" stopColor="#1eff1e" /><stop offset=".5" stopColor="#0df00d" /><stop offset="1" stopColor="#00a800" /></linearGradient>
      <linearGradient id="rod" x1="0" y1="1" x2=".6" y2="0"><stop offset="0" stopColor="#c400c4" /><stop offset=".6" stopColor="#ff14ff" /><stop offset="1" stopColor="#c000c0" /></linearGradient>
      <linearGradient id="rust" x1="1" y1="0" x2="0" y2="1"><stop offset="0" stopColor="#dd7a2c" /><stop offset=".5" stopColor="#b85407" /><stop offset="1" stopColor="#a54800" /></linearGradient>
      <linearGradient id="gold" x1=".8" y1="0" x2=".3" y2="1"><stop offset="0" stopColor="#ffff99" /><stop offset=".5" stopColor="#fbfb86" /><stop offset="1" stopColor="#d2d266" /></linearGradient>
      <linearGradient id="hole" x1="0" y1="0" x2="1" y2="0"><stop offset="0" stopColor="#4c4c4c" /><stop offset="1" stopColor="#8c8c8c" /></linearGradient>
    </defs>
    <g transform="scale(.49745 .49107)" strokeWidth="2.400" strokeLinejoin="round">
      <path fill="#111" d={`M${ring(784.500, 784, 744, 752, 60)}Z`} strokeWidth="1" />
      <path fillRule="evenodd" fill="#dcb432" d={`M${ring(782.5, 784.5, 744, 753, 60)}ZM${ring(781, 786, 628, 637, 50, 0.3)}Z`} />
      <path fill="#111" d={`M${ring(781, 786, 628, 637, 50, 0.3)}Z`} />
      <path fill="#fff" stroke="none" d={`M${ring(783, 784.500, 625, 634.500, 50, 0.3)}Z`} />
      <path d={`M${ring(781, 786, 628, 637, 50, 0.3)}Z`} />
      <path fill="#808080" d="M635 169 724 155 1390 634 1405 727 930 1400 842 1415 172 935 160 847z" />
      <path fill="#7b7b7b" d="M635 169 724 155 965 333 462 417z" />
      <path fill="#696969" d="M1144 464 1390 634 1405 727 1227 973z" />
      <path fill="#494949" d="M1102 1154 930 1400 842 1415 596 1239z" />
      <path fill="#565656" d="M333 600 160 847 172 935 417 1108z" />
      <path d="M727 156 1390 634" strokeWidth="5" /><path d="M1405 727 1227 973" strokeWidth="3.500" /><path d="M160 847l12 88" strokeWidth="4" strokeDasharray="8 3" /><path d="M1390 634l15 93" strokeWidth="4" />
      <path d="M636 164l90-13M842 1420l88-15" strokeDasharray="7 4" />
      <g fill="url(#hole)">
        <ellipse cx="699" cy="290" rx="30" ry="18" transform="rotate(-6 699 290)" /><ellipse cx="1270" cy="702" rx="18" ry="30" transform="rotate(-6 1270 702)" />
        <ellipse cx="862" cy="1281" rx="30" ry="18" transform="rotate(-6 862 1281)" /><ellipse cx="291" cy="868" rx="18" ry="30" transform="rotate(-6 291 868)" />
      </g>
      <path d="M674 298c-2-26 48-26 50-12M1256 682c16-12 28 14 24 42M838 1274c20-16 52-10 48 10M278 848c20-10 32 20 22 42" strokeWidth="2" />
      {bolts.map(([x, y]) => <circle key={`${x}-${y}`} cx={x} cy={y} r="13.800" strokeWidth="2" />)}
      <path d="M463 556c6 6 6 14-2 18M1098 1002c-8 6-6 16-10 22" strokeWidth="2" />
      <path d={`M${ring(780, 787, 359, 364, 60)}Z`} />
      <path fill="#fff" d={`M${ring(781, 786, 314, 319, 50)}Z`} strokeWidth="3" />
    </g>
    <g transform="translate(210 210) scale(.33333)" strokeWidth="3.400">
      <path d="M160 250C70 370 30 560 130 740 190 850 300 950 460 985" strokeWidth="6" strokeDasharray="7 2.500" clipPath="url(#bore)" opacity=".9" />
      <g clipPath="url(#bore)">
        <path fill="#fff" d="M649 91 1100 405V720L968 624 505 291z" stroke="none" />
        <path d="M649 91 505 291 968 624" /><path d="M649 91l296 209" strokeWidth="4" /><path d="M660 103l286 200" strokeWidth="3" strokeDasharray="6 4" />
        <path fill="#fff" d="M505 291 303 575l468 334 197-285z" />
        <path fill="#f3f3f3" stroke="none" d="M303 575l468 334-40 150H560L460 988 161 773z" />
        <path d="M771 909 303 575 161 773l299 215" />
        <path d="M968 624 771 909" stroke="#fff" strokeWidth="8" />
        <path fill="#808080" strokeWidth="2" d="M1005 610v140L830 925 800 915z" /><path d="M978 680C950 760 900 840 830 895" strokeWidth="2.500" />
        <path fill="url(#leaf)" strokeWidth="4" d="M1004 592 750 945l50-20L1004 645z" /><path d="M992 655 815 905" strokeWidth="5" strokeDasharray="9 3" />
        <circle cx="868" cy="765" r="3" fill="#444" strokeWidth="2" /><circle cx="791" cy="904" r="4" strokeWidth="2" /><circle cx="988" cy="631" r="4" strokeWidth="2" />
      </g>
      <g clipPath="url(#bore)">
        <ellipse cx="709" cy="286" rx="124" ry="91" transform="rotate(35 709 286)" fill="url(#shade)" />
        <path fill="#fff" d="M598 229C640 215 700 235 745 275 790 312 797 345 796 377 740 405 660 370 622 320 600 290 594 258 598 229z" />
        <path d="M603 282l24 13-12 17z" fill="#d0835c" strokeWidth="2" /><path d="M727 369l22 9-7 9-22-3z" fill="#5fc8cb" strokeWidth="2" />
        <ellipse cx="920" cy="434" rx="96" ry="66" transform="rotate(35 920 434)" fill="url(#shade)" />
        <path fill="#fff" d="M835 400C870 390 910 405 945 435 975 460 980 485 977 509 930 515 870 480 848 445 838 428 834 415 835 400z" />
        <path d="M862 470l20 4 18 21-22-7z" fill="#dede5e" strokeWidth="1.500" />
        <ellipse cx="365" cy="769" rx="124" ry="91" transform="rotate(35 365 769)" fill="#fff" />
        <path d="M277 683c2 45 30 85 75 115 45 28 90 36 124 28" /><path d="M328 668l28 6-8 10z" fill="#b06248" strokeWidth="2" /><path d="M456 742l16 22-20-8z" fill="#3c9a9a" strokeWidth="2" />
        <ellipse cx="573" cy="917" rx="96" ry="66" transform="rotate(35 573 917)" fill="#fff" />
        <path d="M515 850c3 35 25 65 62 86 28 16 56 22 79 17" /><path d="M592 851l18 5 18 22-18-8z" fill="#8a8a3a" strokeWidth="1.500" />
      </g>
      {screws.map(([x, y]) => <circle key={`${x}-${y}`} cx={x} cy={y} r="9.500" fill="#fff" strokeWidth="2.200" />)}
      <path d="M310 341l102 72-20 30-103-72z" fill="url(#rod)" stroke="#400040" strokeWidth="2.500" /><path d="M400 420q12-8 8 8l-10 10" fill="#c0c" strokeWidth="2.500" />
      <circle cx="525" cy="372" r="11" fill="#f5a27c" strokeWidth="2.500" /><circle cx="384" cy="567" r="11" fill="#c8745a" strokeWidth="2.500" />
      <circle cx="687" cy="489" r="11" fill="#6fe8f0" strokeWidth="2.500" /><circle cx="548" cy="684" r="11" fill="#52bcc0" strokeWidth="2.500" />
      <circle cx="537" cy="527" r="121" fill="#fff" stroke="#222" strokeWidth="9" /><path d="M430 470A121 121 0 0 1 545 406" stroke="#c8745a" strokeWidth="3" /><path d="M645 470A121 121 0 0 1 560 646" stroke="#52bcc0" strokeWidth="3" />
      {[[524, 467], [596, 518], [473, 538], [544, 590]].map(([x, y]) => <g key={x}><circle cx={x} cy={y} r="9" fill="#dfe3ff" strokeWidth="3" /><path d={`M${x - 7} ${y}a7 7 0 0 0 14 0z`} fill="#11c411" stroke="#111" strokeWidth="2" /></g>)}
      {[[595, 444, "#667"], [451, 468, "#b88"], [619, 588, "#7bb"], [474, 612, "#bbc"], [552, 630, "#bbe"]].map(([x, y, c]) => <circle key={x} cx={x} cy={y} r="7" fill={c as string} strokeWidth="3" />)}
      <circle cx="535" cy="528" r="18" fill="#c8c8f4" strokeWidth="3" /><circle cx="535" cy="528" r="10" fill="#0000d8" strokeWidth="2.500" />
      <circle cx="745" cy="676" r="93" fill="url(#gold)" />
      <g clipPath="url(#brass)">
        <path d="M770 580 670 730l-60-10 20-140z" fill="url(#rust)" stroke="none" />
        <path d="M773 587 673 730M815 616 712 762" strokeWidth="10" stroke="#1d1a08" /><path d="M773 587 673 730M815 616 712 762" strokeWidth="2" stroke="#85803c" />
        <circle cx="693" cy="622" r="10" fill="#8a4208" strokeWidth="3" />
      </g>
      <circle cx="745" cy="676" r="93" />
      <circle cx="535" cy="527.500" r="469" />
    </g>
  </svg>
);

const Triad = () => (
  <svg width="60" height="80" viewBox="400 1230 60 80" className="absolute left-[39px] top-[1082px]">
    <circle cx="411" cy="1280" r="4" fill="#dff7df" /><path d="M408 1274l4 6" stroke="#1c8a1c" />
    <path d="M412.500 1280 429 1256" stroke="#1a1ab0" strokeWidth="4.500" /><path d="M413 1279l15-22" stroke="#a9a9ff" strokeWidth="1.200" />
    <path d="M434 1249l-2 12-8.500-6z" fill="#1616c8" />
    <path d="M412.500 1281 435 1296.500" stroke="#b01a1a" strokeWidth="4.500" /><path d="M413 1280.500l21 14.500" stroke="#ffb0b0" strokeWidth="1.200" />
    <path d="M444 1302.500l-12-2.500 5-8z" fill="#c81616" />
    <text x="435" y="1248.500" textAnchor="middle" fontSize="14" fontFamily="Inter, sans-serif" fill="#1a1aff">Z</text>
    <text x="445.500" y="1309.500" textAnchor="middle" fontSize="13" fontFamily="Inter, sans-serif" fill="#f01a1a">X</text>
  </svg>
);

/* ---------- task pane ---------- */

const Books = () => <Svg s={18}><path d="M2 5l5-3 3 1 3-1 3 1 3-1 3 2v14l-4 5-5-1-4 1-5-2-2-1z" fill="#ddd" /><path d="M2 5l5 2 3-2 4 2 3-3 5 1M7 7v14M13 7v15M18 6v16" /></Svg>;
const FolderTab = () => <Svg w={20} h={18} vb="0 0 24 22"><path d="M1.500 20V2h7l2 3h10v3" fill="#fff" /><path d="M1.500 20.500 7 8h16l-5 12.500z" fill="#e2e2e2" /></Svg>;
const Palette = () => <Svg s={18}><path d="M1.500 1.500h21v21h-21z" fill="#fff" strokeWidth="2" /><path d="M4 5h9v3H4zM16 5h4v4h-4zM9 12h4v4h4v3H4v-3h5z" fill="#f0b81a" strokeWidth="1.200" /><path d="M19 13h3v9h-3z" fill="#999" strokeWidth="1" /></Svg>;

const sideTabs = [<Books key="b" />, <FolderTab key="f" />, <Palette key="p" />, <Ball key="c" s={17} />, <ListIcon key="l" s={18} />];
const SideTabs = () => (
  <div className="absolute right-0 top-[29px] z-10 w-[33px] border-l border-t border-[#828282]">
    <div className="flex h-[29px] items-center justify-center bg-[#f7f7f7]"><Home s={19} /></div>
    {sideTabs.map((t, i) => <div key={i} className="flex h-[30px] items-center justify-center border-r border-t border-[#828282] bg-[#d3d3d3] last:border-b">{t}</div>)}
  </div>
);

const SwCube = ({ children, k = 1 }: Kids & { k?: number }) => (
  <Svg w={21} h={20} vb="0 0 25 24" >
    <g transform={`scale(${k})`}>
      <path d="M1 4 8 .500l12 1.500v13l-6 4L1 15z" fill="#c9141c" stroke="#7c0c10" strokeWidth="1" /><path d="M1 4l11 2 8-4-12-1.500z" fill="#e8343a" stroke="none" />
      <text x="6.500" y="14" textAnchor="middle" fontSize="10" fontWeight="800" fill="#fff" stroke="none">S</text>
      <text x="15" y="13.500" textAnchor="middle" fontSize="9" fontWeight="800" fill="#fff" stroke="none">W</text>
    </g>
    {children}
  </Svg>
);
const IRx = () => <SwCube><path d="M12 11h12v12H12z" fill="#fff" stroke="#222" /><text x="18" y="20.500" textAnchor="middle" fontSize="8" fontWeight="700" fill="#222" stroke="none">Rx</text></SwCube>;
const mini = (
  <g transform="translate(11 11) scale(.6)"><path d="M1 4 9 1l12 2v13l-8 5L1 17z" fill="#c9141c" stroke="#5a0a0c" /><text x="11" y="15" textAnchor="middle" fontSize="10" fontWeight="800" fill="#fff" stroke="none">SW</text></g>
);

const Link = ({ icon, children }: { icon: React.ReactNode; children: React.ReactNode }) => (
  <div className="flex h-[32px] items-center"><span className="flex w-[24px] shrink-0 pb-[3px]">{icon}</span><span>{children}</span></div>
);
const Head = ({ children }: Kids) => (
  <div className="-ml-[2px] flex h-[26px] w-[255px] items-center border-t border-[#828282] pl-[4px] pr-[9px] text-[12px] font-bold tracking-normal text-[#333]">
    {children}
    <Svg w={11} h={7} vb="0 0 11 7" className="ml-auto"><path d="M1 6l4.500-4.500L10 6" stroke="#666" strokeWidth="1.800" /></Svg>
  </div>
);

const TaskPane = () => (
  <div className="flex w-[301px] shrink-0 flex-col border-l border-black bg-[#f7f7f7] text-[11.700px] tracking-[0.32px] text-[#444]">
    <div className="flex h-[22px] shrink-0 items-center border-b border-[#222] bg-[#abacb0] pl-[11px] tracking-normal text-black">
      <Svg w={12} h={11} vb="0 0 12 11"><path d="M5.500 1 1.500 5.500l4 4.500M10.500 1l-4 4.500 4 4.500" stroke="#222" strokeWidth="1.700" /></Svg>
      <span className="ml-[31px] whitespace-nowrap text-[14px] font-bold tracking-[0.25px]">SOLIDWORKS Resources</span>
      <span className="ml-auto"><Gear s={17} c="#333" f="#ddd" /></span><span className="ml-[4px] mr-[5px]"><Pin c="#222" s={14} /></span>
    </div>
    <div className="flex flex-col pl-[17px] pt-[33px]">
      <div className="flex h-[32px] items-center"><span className="flex w-[22px] pb-[3px]"><Home s={19} /></span><span className="pt-px tracking-[0.560px]">Welcome to SOLIDWORKS</span></div>
      <div className="mt-[27px]" />
      <Head>SOLIDWORKS Tools</Head>
      <Link icon={<SwCube><path d="M14 11h10v12H14z" fill="#fff" /><path d="M16 14h6M16 17h6M16 20h6" strokeWidth="1.200" /></SwCube>}>Property Tab Builder</Link>
      <Link icon={<IRx />}><span className="tracking-[0.520px]">SOLIDWORKS Rx</span></Link>
      <Link icon={<IRx />}>Performance Benchmark Test</Link>
      <Link icon={<Svg s={18} className="ml-px"><rect x="1" y="1" width="22" height="22" rx="2" fill="#3b7ea5" stroke="#1d4a66" /><circle cx="12" cy="12" r="3.500" stroke="#fff" strokeWidth="2.500" /><path d="M3 10c4-6 12-6 15-2M21 14c-4 6-12 6-15 2" stroke="#fff" strokeWidth="2.200" /></Svg>}><span className="tracking-[0.5px]">Compare My Score</span></Link>
      <Link icon={<Svg w={21} h={20} vb="0 0 25 24"><path d="M1 18c0-6 4-9 7-7l4 6-6 5z" fill="#3b86ab" stroke="#16384a" strokeWidth="1" /><path d="M8 5l10 9M3 2l2 2M10 1v3M17 3l-2 2M4 8l2-1" stroke="#222" strokeWidth="2" />{mini}</Svg>}><span className="tracking-[0.500px]">Copy Settings Wizard</span></Link>
      <Link icon={<SwCube k={0.7}><path d="M7 8h12v14H7z" fill="#fff" strokeWidth="1.200" /><path d="M9 17l3 3 4-7" stroke="#35a81f" strokeWidth="2" /><circle cx="19" cy="13" r="3" fill="#bbb" strokeWidth="1" /><path d="M13 23c0-9 11-9 11 0z" fill="#aaa" strokeWidth="1" /></SwCube>}><span className="tracking-[0.45px]">My Products</span></Link>
      <div className="mt-[28px]" />
      <Head>Online Resources</Head>
      <Link icon={<Svg s={20}><circle cx="12" cy="12" r="11" fill="#2c4a68" stroke="#1a2c40" /><circle cx="12" cy="12" r="5" fill="#48708f" stroke="#142536" /><path d="M4 12h2M18 12h2M12 4v2M12 18v2" stroke="#cfe0ee" strokeWidth="2.500" /></Svg>}><span className="tracking-[0.5px]">3DEXPERIENCE Marketplace</span></Link>
      <Link icon={<Svg s={19}><path d="M1 4l5 1 6 1 6-1 5-1v8l-5 3-5 5-3-1-5-5-4-3z" fill="#ddd" /><path d="M12 6l-4 5 3 1 3-3 5 6M8 14l4 4M11 12l4 5" strokeWidth="1.300" /></Svg>}>Partner Solutions</Link>
      <div className="mt-[28px]" />
      <Head>Subscription Services</Head>
      <Link icon={<Svg w={21} h={20} vb="0 0 25 24"><circle cx="10" cy="10" r="9" fill="#9cc7dc" stroke="#1d4257" /><path d="M4 4c4 0 5 3 4 5s-4 1-5 5M12 2c0 4 4 3 6 5" stroke="#2f7396" strokeWidth="3" />{mini}</Svg>}>Subscription Services</Link>
    </div>
  </div>
);

/* ---------- bottom bars ---------- */

const navShapes = ["M5 4v10M14 4v10L7 9z", "M12 4v10L6 9z", "M6 4v10l7-5z", "M13 4v10M4 4v10l7-5z"];

const BottomTabs = () => (
  <div className="flex h-[21px] shrink-0 border-b border-[#828282]">
    <div className="flex w-[2256px] border-r border-t border-[#828282] bg-[#f7f7f7] text-[14px]">
      <div className="flex border-t border-black pl-[2px]">
        {navShapes.map((d, i) => <div key={i} className="flex w-[20px] items-center justify-center border border-[#8585a0] bg-[#a9aac0]"><svg width="18" height="17" viewBox="0 0 18 18"><path d={d} fill="#8586a3" stroke="#8586a3" strokeWidth="1.500" /></svg></div>)}
      </div>
      <div className="flex w-[77px] items-center justify-center border-r border-[#828282] pl-[5px] text-[14.800px] font-bold tracking-[0.800px] text-black">Model</div>
      <div className="flex w-[89px] items-center justify-center border-r border-[#828282] bg-[#d3d3d3] tracking-[0.25px]">3D Views</div>
      <div className="flex w-[144px] items-center border-r border-[#828282] bg-[#d3d3d3] pl-[14px] tracking-[0.550px]">Motion Study 1</div>
    </div>
    <div className="ml-[2px] w-[218px] border-b border-l border-black bg-[#f7f7f7]" />
  </div>
);

const Bar = ({ className = "" }: Kids) => <span className={`h-[18px] w-px bg-[#c8c8c8] ${className}`} />;
const StatusBar = () => (
  <div className="flex h-[21px] shrink-0 items-center bg-[#f7f7f7] pt-[2px] text-[14px]">
    <span className="ml-px whitespace-nowrap tracking-[0.150px]">SOLIDWORKS Education Edition - Instructional Use Only</span>
    <span className="ml-auto w-[97px] whitespace-nowrap">Under Defined</span>
    <Bar className="ml-[6px]" /><Bar className="ml-[7px]" /><Bar className="ml-[7px]" /><Bar className="ml-[15px]" />
    <span className="ml-[38px] w-[69px]">MMGS</span>
    <svg width="6" height="4" viewBox="0 0 6 4"><path d="M0 4h6L3 0z" fill="#333" /></svg>
    <Svg w={18} h={15} vb="0 0 24 20" className="-mt-[3px] ml-[66px] mr-[2px]"><path d="M2 5 7 1l15 6-4 11L3 12z" fill="#ddd" strokeWidth="2" /><path d="M3 8l15 6 4-7M8 5l3 4 3-3 3 5" /></Svg>
  </div>
);

const TaskBtn = ({ children, on = true, active = false }: { children: React.ReactNode; on?: boolean; active?: boolean }) => (
  <div className={`flex shrink-0 flex-col items-center ${active ? "-ml-px mr-[2px] w-[61px] border-r-4 border-[#58534b] bg-[#6c665f] pl-[4px]" : "w-[62px]"}`}>
    <div className="flex flex-1 items-center">{children}</div>
    <span className={`h-[3px] ${active ? "-ml-[4px] -mr-[4px] self-stretch" : "w-[51px]"} ${on ? "bg-[#76b9ed]" : ""}`} />
  </div>
);

const TaskBar = () => (
  <div className="flex h-[50px] shrink-0 bg-gradient-to-r from-[#463f35] from-20% via-[#4b4437] via-[84%] to-[#1d1d1c] to-[88%] text-white">
    <div className="flex w-[60px] shrink-0 items-center justify-center bg-[#1b1b1b]"><svg width="21" height="21" viewBox="0 0 21 21"><path d="M0 3l8.500-1.200V10H0zM9.700 1.600 21 0v10H9.700zM0 11h8.500v8.200L0 18zM9.700 11H21v10L9.700 19.400z" fill="#fff" /></svg></div>
    <div className="flex w-[360px] shrink-0 items-center border border-[#c0c0c0] bg-[#f2f2f2] pl-[15px] text-[17px] text-[#333]">
      <Svg s={21}><circle cx="15" cy="8.500" r="7" stroke="#222" strokeWidth="1.700" /><path d="M10 14 2 22" stroke="#222" strokeWidth="1.900" /></Svg>
      <span className="ml-[13px] whitespace-nowrap tracking-[0.35px]">Type here to search</span>
      <svg width="78" height="48" viewBox="0 0 78 48" className="ml-auto">
        <path d="M13 48c1-6 5-10 10-12l9-5c7 1 12 5 16 17z" fill="#3f86c8" /><path d="M22 37l9-6-5 14z" fill="#f6f6f6" />
        <path d="M3 9C4 2 14-1 23 2c9 2 11 9 10 15 2 5 1 8-3 10L8 14C4 14 2 12 3 9z" fill="#e0cfb4" />
        <path d="M6 15c1-4 4-6 7-7l12 1c3 3 4 6 4 11l-1 10-6 7c-7 1-12-4-14-11z" fill="#f0c6ab" />
        <path d="M4 8C8 3 16 4 22 7c4 3 4 8 5 11 3-6 2-12-3-15C16-1 6 1 4 8z" fill="#efe3ce" />
        <circle cx="10" cy="19" r="3.500" fill="none" stroke="#33241c" strokeWidth="1.500" /><circle cx="19" cy="19" r="4" fill="none" stroke="#33241c" strokeWidth="1.500" /><path d="M23 18l5-1" stroke="#33241c" strokeWidth="1.300" /><path d="M11 31l6 0" stroke="#b0705a" strokeWidth="1.500" />
        <path d="M54 16h6v32h-6z" fill="#e89a3a" /><path d="M60 14h7v34h-7z" fill="#a8281e" /><path d="M67 14h6v34h-6z" fill="#3d8a76" />
        <path d="M54 20h6M54 40h6M61 18h5M61 42h5M68 18h4M68 42h4" stroke="#ffd27a" strokeWidth="1.500" /><path d="M63.500 20l1.500 3h-3zM57 26v9M70 24v12" stroke="#7c3b12" fill="#ffd27a" />
      </svg>
    </div>
    <div className="flex pl-px">
      <TaskBtn on={false}><Svg s={21} className="mr-[3px]"><path d="M3 1v4h12V1M3 9h12v7H3zM3 24v-4h12v4M20 1v5M20 9v3M20 15v9" stroke="#fff" strokeWidth="1.700" /></Svg></TaskBtn>
      <TaskBtn><svg width="28" height="26" viewBox="0 0 28 26"><path d="M0 2c0-1 .5-1.500 1.500-1.500h10L14 4h12.500c1 0 1.500.5 1.500 1.500V20H0z" fill="#e0a010" /><path d="M0 5h12l2-1h14v18H0z" fill="#ffd869" /><path d="M5 26V16c0-2 1-3 3-3h12c2 0 3 1 3 3v10h-5v-6h-8v6z" fill="#3b94d9" /></svg></TaskBtn>
      <TaskBtn on={false}>
        <svg width="29" height="34" viewBox="0 0 29 34">
          <path d="M20 1c1 3 5 5 7 10 4 8 2 16-4 20-7 4-16 2-20-4-4-5-3-13 0-18l1-2 1 2 3-2c0 2 1 3 3 3 3 0 5 2 5 2 3-3 2-7 4-11z" fill="#ff8a1f" />
          <path d="M20 1c1 3 5 5 7 10 4 7 3 13 0 17-1-6-3-12-8-16-2-4-1-8 1-11z" fill="#ffdd3a" />
          <circle cx="14.500" cy="20" r="6.500" fill="#7c3fe8" /><path d="M7 12c3 2 7 1 9 4l-5 2c-1 4 1 8 6 8-6 3-12-2-11-8z" fill="#ff5a2a" />
          <path d="M1 20c2 11 15 15 24 6-5 9-21 11-24-6z" fill="#ef2a66" />
        </svg>
      </TaskBtn>
      <TaskBtn on={false}><svg width="23" height="30" viewBox="0 0 23 30"><rect width="23" height="30" rx="1.500" fill="#7d868f" /><path d="M3 3h17v6H3z" fill="#4cdcfa" /><path d="M3 12h4.700v4.700H3zM9 12h4.700v4.700H9zM15 12h5v4.700h-5zM3 18h4.700v4H3zM9 18h4.700v4H9zM3 23.500h4.700V27H3zM9 23.500h4.700V27H9z" fill="#dfe5ea" /><path d="M15 19h5v8h-5z" fill="#1b4f8a" /></svg></TaskBtn>
      <TaskBtn active>
        <svg width="30" height="34" viewBox="0 0 30 34">
          <path d="M1 7 12 1l17 3v20L15 31 1 25z" fill="#b50f16" /><path d="M1 7l14 3 14-6-17-3z" fill="#f03a3a" /><path d="M15 10v20" stroke="#6c0a0e" strokeWidth="1.500" />
          <text x="8" y="23.500" textAnchor="middle" fontSize="14" fontWeight="800" fill="#fff">S</text><text x="21.500" y="22" textAnchor="middle" fontSize="12.500" fontWeight="800" fill="#fff">W</text>
          <text x="20" y="32" textAnchor="middle" fontSize="8" fontWeight="800" fill="#fff" stroke="#222" strokeWidth="2" paintOrder="stroke">2019</text>
        </svg>
      </TaskBtn>
      <TaskBtn><svg width="28" height="30" viewBox="0 0 28 30"><path d="M14 4h13v22H14z" fill="#fff" /><path d="M16 8h9M16 12h9M16 16h9M16 20h9" stroke="#2b5797" strokeWidth="1.700" /><path d="M0 3 16 0v30L0 27z" fill="#2556a4" /><text x="8" y="20" textAnchor="middle" fontSize="13" fontWeight="800" fill="#fff">W</text></svg></TaskBtn>
      <TaskBtn><svg width="24" height="24" viewBox="0 0 24 24" fill="none" stroke="#fff"><circle cx="12" cy="12" r="9.500" strokeWidth="4" strokeDasharray="3.700 3.760" /><circle cx="12" cy="12" r="6.500" strokeWidth="3" /></svg></TaskBtn>
      <TaskBtn><svg width="30" height="28" viewBox="0 0 30 28"><path d="M15 1l12-1-3 15-11-3z" fill="#eef1f3" /><path d="M17 4l7-1M16 7l7-1" stroke="#aab" /><path d="M9 10h5l10 4 3 0-6 13H6l-5-5z" fill="#8b949b" /><path d="M1 21 8 10h6l9 4-5 9z" fill="#cfd7dc" /><path d="M9 12h6l-2 5H6z" fill="#5aa0c8" /><path d="M15 16h5M14 19h5" stroke="#556" strokeWidth="1.500" /><path d="M1 21l17 2-1 4H5z" fill="#e3e7ea" /></svg></TaskBtn>
    </div>
    <div className="ml-auto flex shrink-0 items-center">
      <Cell className="w-[30px]"><Svg w={17} h={10} vb="0 0 17 10"><path d="M1 9l7.500-7.500L16 9" stroke="#fff" strokeWidth="1.500" /></Svg></Cell>
      <Cell className="w-[30px]"><svg width="21" height="20" viewBox="0 0 21 20" fill="none" stroke="#fff" strokeWidth="1.300"><path d="M1 3 20 1v17L1 17z" /><path d="M7 9c1-5 6-4 7-2M14 10c-1 5-6 4-7 2M14 4v3h-3M7 15v-3h3" /><circle cx="15.500" cy="15.500" r="4.300" fill="#ff9800" stroke="none" /></svg></Cell>
      <Cell className="w-[30px]"><svg width="21" height="18" viewBox="0 0 21 18" fill="none" stroke="#fff" strokeWidth="1.300"><path d="M5 3h15v10H3V8M11 13v4M7 17h8M1 1h4v4H1zM3 5v3" /></svg></Cell>
      <Cell className="w-[30px]"><svg width="21" height="16" viewBox="0 0 21 16" fill="none" stroke="#fff" strokeWidth="1.300"><path d="M1 5h3l4-4v14l-4-4H1zM11 5c1.500 2 1.500 4 0 6M14 3c2.500 3 2.500 7 0 10" /><path d="M17 1c3.500 4 3.500 10 0 14" stroke="#888" /></svg></Cell>
      <Cell className="w-[46px] text-[14.500px]">ENG</Cell>
      <div className="flex w-[91px] flex-col items-center text-[14px] leading-[23px]"><span>13:42</span><span>13-06-2025</span></div>
      <Cell className="ml-[16px] w-[20px]"><svg width="21" height="20" viewBox="0 0 21 20" fill="none" stroke="#fff" strokeWidth="1.400"><path d="M1 1h19v14h-6.500L10.500 19l-3-4H1z" /></svg></Cell>
      <span className="ml-[25px] mr-[5px] h-[50px] w-px bg-[#6a6a6a]" />
    </div>
  </div>
);

export default function App() {
  return (
    <div className="flex h-[1440px] w-[2560px] flex-col overflow-hidden bg-[#f7f7f7] font-['Open_Sans',sans-serif] text-[12.700px] text-black">
      <TitleBar />
      <Ribbon />
      <div className="flex min-h-0 flex-1">
        <div className="flex min-w-0 flex-1 flex-col">
          <TabRow />
          <div className="flex min-h-0 flex-1">
            <LeftPanel />
            <div className="relative flex-1 bg-white">
              <div className="absolute -left-px top-[561px] flex h-[49px] w-[12px] items-center justify-center border border-l-0 border-[#828282] bg-[#f7f7f7]"><Dot /></div>
              <Model />
              <Triad />
              <SideTabs />
            </div>
          </div>
        </div>
        <TaskPane />
      </div>
      <BottomTabs />
      <StatusBar />
      <TaskBar />
    </div>
  );
}
